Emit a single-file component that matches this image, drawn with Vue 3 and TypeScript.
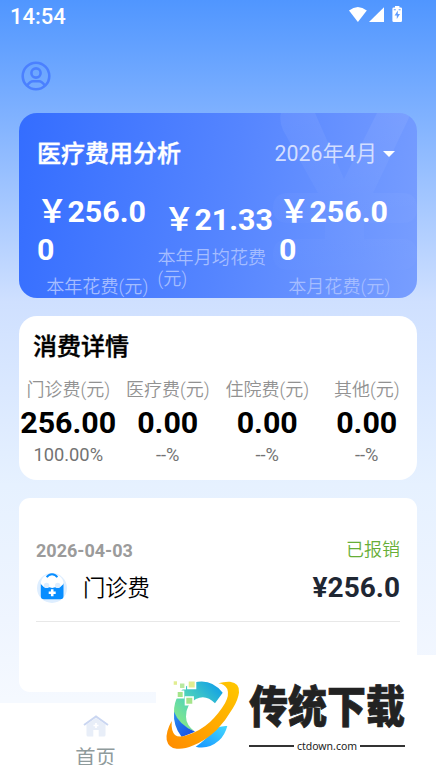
<script setup lang="ts">
interface Stat { value: string; label: string }
interface Detail { label: string; value: string; percent: string }

const stats: Stat[] = [
  { value: '￥256.00', label: '本年花费(元)' },
  { value: '￥21.33', label: '本年月均花费(元)' },
  { value: '￥256.00', label: '本月花费(元)' },
]
const details: Detail[] = [
  { label: '门诊费(元)', value: '256.00', percent: '100.00%' },
  { label: '医疗费(元)', value: '0.00', percent: '--%' },
  { label: '住院费(元)', value: '0.00', percent: '--%' },
  { label: '其他(元)', value: '0.00', percent: '--%' },
]
</script>

<template>
  <div class="page">
    <header class="status">
      <span class="clock">14:54</span>
      <svg class="signals" width="56" height="18" viewBox="0 0 56 18" fill="#fff">
        <path d="M2 4.600Q10.900-2.400 19.800 4.600L10.900 16z" />
        <path d="M37 1.300V16H22z" />
        <path d="M46.800 1.500h1.200V0h4.400v1.500h1.300q1.300 0 1.300 1.200v12q0 1.300-1.300 1.300h-7q-1.300 0-1.300-1.300v-12q0-1.200 1.400-1.200z" />
        <path d="M50.800 4.500 47.600 9.500h2.200v3.500L53 8h-2.200zM46.800 3.200h2v1h-2zm4.800 0h2v1h-2z" fill="#619dff" />
      </svg>
    </header>
    <div class="profile">
      <svg width="30" height="30" viewBox="0 0 30 30" fill="none" stroke="#4b80ff" stroke-width="2.600">
        <circle cx="15" cy="15" r="13.300" />
        <circle cx="15" cy="12" r="4.600" />
        <path d="M6.200 24.500Q9 20.200 12 20.200h6Q21 20.200 23.800 24.500" />
      </svg>
    </div>

    <section class="card summary">
      <svg class="mark" width="150" height="185" viewBox="0 0 150 185">
        <defs>
          <linearGradient id="fade" x1="0" y1="0" x2="0" y2="185" gradientUnits="userSpaceOnUse"><stop stop-color="#fff" stop-opacity=".065" /><stop offset=".5" stop-color="#fff" stop-opacity=".025" /><stop offset="1" stop-color="#fff" stop-opacity=".008" /></linearGradient>
        </defs>
        <path d="M14 0h34l29 66L110 0h33q-1 6-4 11l-33 69h29q15 0 15 15t-15 15H97v16h38q15 0 15 15t-15 16H22Q6 157 6 141.500T22 126h36v-16H22Q6 110 6 95t16-15h29L16 17Q12 8 14 0z" fill="url(#fade)" />
      </svg>
      <div class="summary-head">
        <h2>医疗费用分析</h2>
        <div class="month"><span>2026年4月</span><i class="caret"></i></div>
      </div>
      <div class="stats">
        <div v-for="s in stats" :key="s.label" class="stat">
          <div class="stat-value">{{ s.value }}</div>
          <div class="stat-label">{{ s.label }}</div>
        </div>
      </div>
    </section>

    <section class="card breakdown">
      <h2>消费详情</h2>
      <div class="details">
        <div v-for="d in details" :key="d.label" class="detail">
          <span class="detail-label">{{ d.label }}</span>
          <span class="detail-value">{{ d.value }}</span>
          <span class="detail-percent">{{ d.percent }}</span>
        </div>
      </div>
    </section>

    <section class="card records">
      <article class="record">
        <div class="record-top"><time>2026-04-03</time><span class="paid">已报销</span></div>
        <div class="record-main">
          <svg class="kit" width="30" height="30" viewBox="0 0 30 30">
            <circle cx="15" cy="15" r="15" fill="#deeeff" />
            <path d="M3.800 10.500h22.700V23q0 3.300-3.300 3.300H7.100Q3.800 26.300 3.800 23z" fill="#078dff" />
            <path d="M7.500 3Q11 1.500 15 1.500T22.500 3Q26.500 6 26.500 11L23 14.300h-5L15.200 15l-2.900-.7H7L3.800 11Q4 6 7.500 3z" fill="#fff" />
            <circle cx="9.600" cy="12.400" r="2.700" fill="#deeeff" /><circle cx="20.700" cy="12.400" r="2.700" fill="#deeeff" />
            <path d="M9.700 4.300Q11.500 1.200 15 1.200t5.300 3.100" fill="none" stroke="#078dff" stroke-width="1.900" />
            <path d="M15.200 16.200v7M11.700 19.700h7" stroke="#fff" stroke-width="2.600" />
          </svg>
          <span class="kind">门诊费</span>
          <strong class="amount">¥256.0</strong>
        </div>
      </article>
    </section>

    <nav class="tabs">
      <div class="tab">
        <svg width="26" height="22" viewBox="0 0 26 22">
          <path d="M3.500 9.500 13 3l9.500 6.500V20q0 1.500-1.500 1.500h-5.300V15h-5.400v6.500H5q-1.500 0-1.500-1.500z" fill="#e8eef8" />
          <path d="M1 10 13 1.400 25 10" fill="none" stroke="#cad6f1" stroke-width="2" />
          <path d="M13 8v5M10.500 10.500h5" stroke="#fff" stroke-width="1.700" />
        </svg>
        <span class="tab-label">首页</span>
      </div>
    </nav>

    <aside class="brand">
      <svg width="76" height="72" viewBox="0 0 76 72">
        <defs>
          <linearGradient id="ring" x1="1" y1="0" x2="0" y2="1"><stop stop-color="#ffc800" /><stop offset="1" stop-color="#ff8b00" /></linearGradient>
          <linearGradient id="arc" x1="1" y1="0" x2="0" y2="1"><stop stop-color="#0797ee" /><stop offset=".5" stop-color="#4bd1bd" /><stop offset="1" stop-color="#9af078" /></linearGradient>
          <linearGradient id="tail" x1="0" y1="1" x2="1" y2="0"><stop stop-color="#1594ff" /><stop offset="1" stop-color="#45d8ff" /></linearGradient>
          <linearGradient id="base" x1="0" y1="0" x2="1" y2="1"><stop stop-color="#2a8ff0" /><stop offset="1" stop-color="#1747e0" /></linearGradient>
        </defs>
        <path d="M57.700 12.700Q49 1.500 36.700 1.500 22 1.500 14 14 8.500 23 9 33q5 13 21 18.700Q21 45 21 36.700 21 24 31 19q10-5 19 4.300z" fill="url(#arc)" />
        <path d="M9 31.700Q14 45 30 51.700L16.700 57Q8 46 9 31.700z" fill="url(#base)" />
        <path d="M62.300 46Q60 55 54 60.500 43 70 30.700 66.700 42 59 50 48.500 56 45.500 62.300 46z" fill="url(#tail)" />
        <path d="M53.300 3.300Q59 1.400 65 1.700 75 3 74 12.500 73 20 68 28 61 40 51.700 50 40 61 28 65.500 19 69.500 11.700 68.700 3.500 68 1.700 60 .5 52 6.700 41 6 51 10 55 14 58 22.500 55 35 51 45 42 54 33.500 60 23.300 64.500 15 62.300 9 59.500 4 53.300 3.300z" fill="url(#ring)" />
        <g stroke="#fff" stroke-width="1.600">
          <path d="M22.900.800h7.600v7.600h-7.600z" fill="#e1ed91" /><path d="M14.200 2.800h6v6h-6z" fill="#b8e9a0" />
          <path d="M11.900 11.200h6.600v6.600h-6.600z" fill="#a4e48b" /><path d="M20.500 17h7.600v7.600h-7.600z" fill="#a4e48b" />
          <path d="M8.700 1.300H12v3.500H8.700z" fill="#e1ed91" stroke="none" />
        </g>
      </svg>
      <div class="brand-copy">
        <div class="brand-name">传统下载</div>
        <div class="brand-site"><span>ctdown.com</span></div>
      </div>
    </aside>
  </div>
</template>

<style>
body { margin: 0; }
</style>

<style scoped>
* { box-sizing: border-box; }
.page {
  position: relative;
  display: flex;
  flex-direction: column;
  width: 436px;
  height: 775px;
  overflow: hidden;
  font-family: Roboto, "Noto Sans CJK SC", sans-serif;
  background: linear-gradient(180deg, #5096ff 0, #7db0ff 110px, #cfe0ff 302px, #e6f1ff 485px, #eff5ff 620px, #f5f9ff 700px);
}
h2 { margin: 0; font-size: 24px; line-height: 32px; font-weight: 500; -webkit-text-stroke: .4px currentColor; }
.status { display: flex; justify-content: space-between; height: 32px; padding: 6px 33px 0 10px; }
.clock { color: #fff; font-size: 22px; line-height: 22px; font-weight: 500; }
.profile { height: 81px; padding: 29px 0 0 21px; }
.profile svg { display: block; }
.card { flex: none; margin: 0 19px; border-radius: 18px; background: #fff; overflow: hidden; }
.summary { position: relative; height: 185px; color: #fff; background: linear-gradient(100deg, #346dff 0, #5585ff 52%, #789eff 100%); }
.mark { position: absolute; right: 0; top: 0; }
.summary-head { position: relative; display: flex; justify-content: space-between; align-items: center; padding: 25px 22px 0 18px; }
.summary-head h2 { padding-top: 1px; line-height: 31px; }
.month { display: flex; align-items: center; gap: 6px; color: #d3deff; font-size: 21.300px; line-height: 32px; font-weight: 400; }
.caret { border: 6.500px solid transparent; border-top-color: #fff; border-bottom: 0; }
.stats { position: relative; display: grid; grid-template-columns: repeat(3, 121px); align-items: center; padding: 23px 0 0 18px; }
.stat { display: flex; flex-direction: column; align-items: center; }
.stat-value { font-size: 30.400px; line-height: 37.500px; font-weight: 700; word-break: break-all; }
.stat-label { margin: 8px 0 0 -.5px; font-size: 18.100px; line-height: 21px; color: #a5bdff; font-weight: 350; }
.breakdown { height: 164px; margin-top: 18px; }
.breakdown h2 { padding: 15px 14px 0; color: #000; }
.details { display: grid; grid-template-columns: repeat(4, 99.500px); padding-top: 16px; }
.detail { display: flex; flex-direction: column; align-items: center; margin-left: -1px; }
.detail-label { font-size: 18px; line-height: 21px; color: #929292; font-weight: 350; white-space: nowrap; }
.detail-value { margin-top: 5px; font-size: 30.400px; line-height: 35px; font-weight: 700; color: #000; }
.detail-percent { margin-top: 4px; font-size: 18.300px; line-height: 21px; color: #737373; }
.records { height: 194px; margin-top: 18px; padding: 38px 17px 0; border-radius: 11px; }
.record { height: 86px; border-bottom: 1px solid #e8e8e8; }
.record-top { display: flex; justify-content: space-between; height: 36px; line-height: 26px; }
time { padding-top: 2px; font-size: 18px; font-weight: 700; color: #9b9b9b; }
.paid { padding-top: 1px; font-size: 18px; font-weight: 350; color: #67ae37; }
.record-main { display: flex; align-items: center; height: 32px; }
.kit { margin-left: 1px; }
.kind { margin: 0 0 1px 16px; font-size: 22.300px; line-height: 28px; font-weight: 350; color: #000; }
.amount { margin-left: auto; font-size: 28px; line-height: 32px; color: #1f2733; }
.tabs { height: 72px; margin-top: 11px; padding-top: 12px; background: #fff; }
.tab { display: flex; flex-direction: column; align-items: center; width: 191px; }
.tab-label { height: 22px; margin-top: 6px; overflow: hidden; font-size: 20.300px; line-height: 31px; color: #8f9b9c; font-weight: 400; }
.brand { position: absolute; right: 0; bottom: 0; display: flex; width: 280px; height: 120px; padding: 25px 0 0 9px; background: #fff; }
.brand > svg { flex: none; }
.brand-copy { width: 156px; margin-left: 8px; }
.brand-name { height: 60px; font-size: 39px; line-height: 56px; font-weight: 900; color: #222; transform: scaleY(1.15); -webkit-text-stroke: .6px #222; white-space: nowrap; }
.brand-site { display: flex; align-items: center; gap: 3px; height: 12px; font-family: "Noto Sans", sans-serif; font-size: 10.500px; line-height: 12px; color: #222; }
.brand-site::before, .brand-site::after { content: ""; flex: 1; height: 2px; background: #333; }
</style>
